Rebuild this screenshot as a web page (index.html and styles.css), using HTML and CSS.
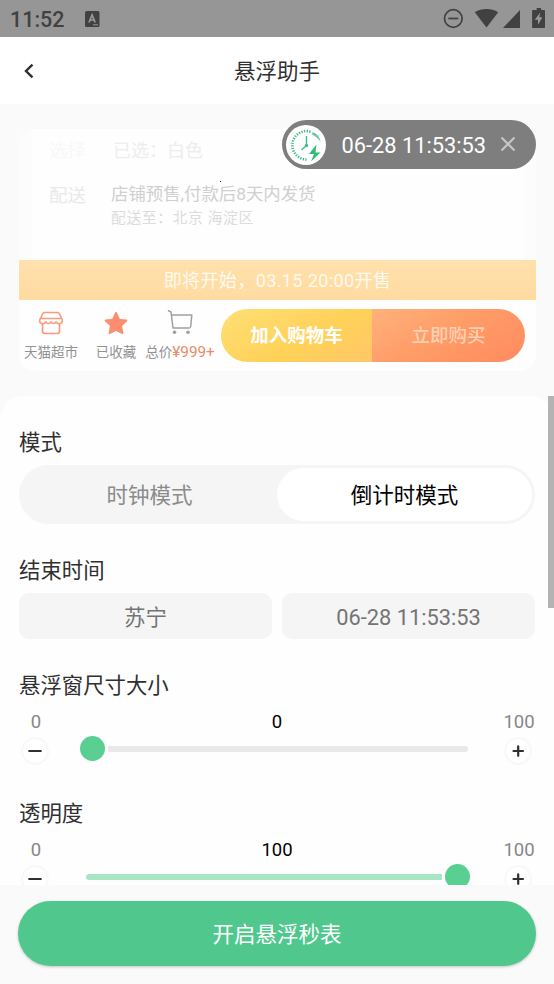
FILE: index.html
```html
<!DOCTYPE html>
<html lang="zh-CN">
<head>
<meta charset="utf-8">
<title>悬浮助手</title>
<link rel="stylesheet" href="styles.css">
</head>
<body>
<div class="app">
  <div class="status">
    <span class="status-time">11:52</span>
    <svg class="status-app" width="15" height="16" viewBox="0 0 15 16"><rect width="14.5" height="16" rx="1.5" fill="#414141"/><path d="M4 11.5 7.1 4l3.1 7.5M5.2 9h3.9" fill="none" stroke="#999" stroke-width="1.7"/><path d="M8 13.8h5" stroke="#999" stroke-width="1"/></svg>
    <svg class="status-icons" width="104" height="22" viewBox="0 0 104 22">
      <g fill="none" stroke="#414141" stroke-width="1.7"><circle cx="10.3" cy="11.5" r="8.8"/><path d="M5.3 11.5h10"/></g>
      <path fill="#414141" d="M31.8 5.2C38.5.8 48.5.8 55.2 5.2L43.5 20.500zM60 21 77 3v18zM90.700 3h3V1h4.400v2h3.100q.8 0 .8.8v16.400q0 .8-.8.8H89.900q-.8 0-.8-.8V3.800q0-.8.8-.8z"/>
      <path fill="#999" d="M97.300 5.500 91.800 12.800h3.200v5l4.300-7.600h-3z"/>
    </svg>
  </div>
  <header class="header">
    <svg class="back" width="12" height="16" viewBox="0 0 12 16"><path d="M9.500 1.700 3 8l6.500 6.400" fill="none" stroke="#303030" stroke-width="2.400"/></svg>
    <h1>悬浮助手</h1>
  </header>

  <main class="content">
    <section class="preview">
      <div class="goods">
        <div class="goods-row first"><span class="goods-key">选择</span><span class="goods-pick">已选：白色</span></div>
        <div class="goods-row second"><span class="goods-key">配送</span>
          <div><div class="goods-main">店铺预售,付款后8天内发货</div><div class="goods-sub">配送至：北京 海淀区</div></div>
        </div>
      </div>
      <div class="banner">即将开始，03.15 20:00开售</div>
      <div class="buybar">
        <div class="tool shop"><svg width="26" height="26" viewBox="0 0 26 26"><g fill="none" stroke="#f99b7d" stroke-width="1.700" stroke-linejoin="round"><path d="M6.500 2.500h13q1.500 0 2 1.500L24.300 10q.5 2.500-1.800 3.500-2.500 1-4.500-1.500-2.500 3-5 0-2.500 3-5 0-2 2.500-4.500 1.500Q1.200 12.500 1.700 10L4.500 4q.5-1.500 2-1.500zM2.600 8.500h20.800M4.500 14v7q0 2.500 2.500 2.500h12q2.500 0 2.500-2.500v-7"/></g></svg><span>天猫超市</span></div>
        <div class="tool fav"><svg width="26" height="26" viewBox="0 0 26 26"><path d="m13 3 3.100 6.700 7.300.9-5.400 5 1.400 7.400-6.400-3.200L6.600 23 8 15.600l-5.400-5 7.300-.9z" fill="#fc8d6e" stroke="#fc8d6e" stroke-width="2" stroke-linejoin="round"/></svg><span>已收藏</span></div>
        <div class="tool price"><svg width="26" height="26" viewBox="0 0 26 26"><g fill="none" stroke="#a0a0a0" stroke-width="1.500" stroke-linecap="round" stroke-linejoin="round"><path d="M1.500 1.800 4 3l2 16h16q1.500 0 1.700-1.500L24.800 6H4.500"/></g><circle cx="7.500" cy="23.300" r="1.800" fill="#a0a0a0"/><circle cx="21" cy="23.300" r="1.800" fill="#a0a0a0"/></svg><span>总价<b>¥999+</b></span></div>
        <div class="buy"><div class="cart">加入购物车</div><div class="now">立即购买</div></div>
      </div>
      <i class="speck"></i>
      <div class="float">
        <div class="float-logo"><svg width="40" height="40" viewBox="0 0 40 40"><circle cx="20" cy="20" r="20" fill="#fff"/><path d="M20.500 34.500A14.200 14.200 0 1 1 25.500 7" fill="none" stroke="#43bc84" stroke-width="2.600" stroke-dasharray="1.300 1.300"/><path d="M26.500 7Q33.500 9.500 34.500 17q-2.800-4.800-8.500-7.500z" fill="#43bc84" opacity=".8"/><path d="M20.500 11v9.500L15.500 25" fill="none" stroke="#43bc84" stroke-width="1.400"/><circle cx="20.500" cy="20.500" r="1.700" fill="#43bc84"/><path d="m30.500 19.500-7.500 9.500h5L25 36.500l9.500-9h-5z" fill="#32bc79"/></svg></div>
        <span class="float-time">06-28 11:53:53</span>
        <svg class="float-close" width="16" height="16" viewBox="0 0 16 16"><path d="m1.500 1.500 13 13m0-13-13 13" stroke="#c6c6c6" stroke-width="2.200"/></svg>
      </div>
    </section>

    <section class="panel">
      <h2>模式</h2>
      <div class="segment"><div class="seg">时钟模式</div><div class="seg active">倒计时模式</div></div>
      <h2 class="spaced">结束时间</h2>
      <div class="fields"><div class="field">苏宁</div><div class="field time">06-28 11:53:53</div></div>
      <h2 class="spaced">悬浮窗尺寸大小</h2>
      <div class="range">
        <span class="edge">0</span><span class="value">0</span><span class="edge">100</span>
        <div class="step"><svg width="14" height="14" viewBox="0 0 14 14"><path d="M1.200 7h11.600"/></svg></div>
        <div class="slider"><i class="thumb"></i><i class="track"></i></div>
        <div class="step"><svg width="14" height="14" viewBox="0 0 14 14"><path d="M2.500 7h9.500M7.200 2.300v9.500"/></svg></div>
      </div>
      <h2 class="spaced">透明度</h2>
      <div class="range">
        <span class="edge">0</span><span class="value">100</span><span class="edge">100</span>
        <div class="step"><svg width="14" height="14" viewBox="0 0 14 14"><path d="M1.200 7h11.600"/></svg></div>
        <div class="slider full"><i class="track"></i><i class="thumb"></i></div>
        <div class="step"><svg width="14" height="14" viewBox="0 0 14 14"><path d="M2.500 7h9.500M7.200 2.300v9.500"/></svg></div>
      </div>
    </section>
  </main>
  <footer class="footer"><button>开启悬浮秒表</button></footer>
  <i class="scrollbar"></i>
</div>
</body>
</html>
```
FILE: styles.css
```css
* { box-sizing: border-box; }
body { margin: 0; font-family: Roboto, "Noto Sans CJK SC", sans-serif; background: #fafafa; color: #303030; }
svg { display: block; flex: none; }
h1, h2 { margin: 0; font-weight: 400; }
.app { position: relative; width: 554px; height: 984px; display: flex; flex-direction: column; overflow: hidden; }
.status { height: 37px; flex: none; display: flex; align-items: center; padding: 0 7px 0 10px; background: #969696; color: #414141; }
.status-time { width: 75px; font-size: 21.5px; font-weight: 500; line-height: 35px; padding-top: 2px; }
.status-icons { margin: -2px 0 0 auto; }
.header { height: 67px; flex: none; display: grid; grid-template-columns: 40px 1fr 40px; align-items: center; background: #fff; }
.back { margin-left: 23px; }
h1 { font-size: 21.5px; line-height: 30px; padding-top: 2px; text-align: center; }
.content { height: 781px; flex: none; overflow: hidden; padding-top: 25px; }

.preview { position: relative; width: 517px; height: 242px; margin: 0 0 25px 19px; border-radius: 16px; background: #fefefe; }
.goods { height: 131px; padding: 9px 0 0 30px; background: linear-gradient(90deg, #fcfcfc 12px, #fefefe 13px, #fefefe 505px, #fcfcfc 506px); border-radius: 16px 16px 0 0; color: #ddd; }
.goods-row { display: flex; font-size: 18px; line-height: 26px; }
.goods-key { width: 62px; color: #e9e9e9; font-size: 18.5px; }
.first .goods-key { color: #f8f8f8; }
.goods-pick { color: #ededed; padding-left: 2px; }
.second { margin-top: 17px; }
.second .goods-key { padding-top: 2px; }
.goods-main { font-size: 17.4px; color: #d0d0d0; white-space: nowrap; }
.goods-sub { font-size: 14.8px; letter-spacing: .6px; line-height: 22px; color: #dcdcdc; white-space: nowrap; }
.banner { height: 40px; background: linear-gradient(#ffe1ac, #ffdba1); color: #fffaf0; font-size: 18px; letter-spacing: .4px; line-height: 42px; text-align: center; }
.buybar { height: 71px; display: flex; }
.tool { display: flex; flex-direction: column; align-items: center; padding-top: 10px; font-size: 13.5px; line-height: 20px; color: #929292; white-space: nowrap; }
.tool span { margin-top: 6px; }
.tool b { color: #e98a68; font-weight: 400; font-size: 15.3px; }
.shop { width: 64px; }
.fav { width: 66px; }
.price { width: 62px; padding-top: 9px; }
.price span { margin-top: 7px; }
.buy { width: 304px; height: 53px; margin: 9px 0 0 10px; display: flex; border-radius: 27px; overflow: hidden; font-size: 18.5px; line-height: 54px; text-align: center; }
.cart { width: 151px; background: linear-gradient(150deg, #fedf76, #ffd157 60%, #ffc66a); color: #fff; font-weight: 700; }
.now { flex: 1; background: linear-gradient(150deg, #ffb17d, #ff9d67 45%, #ff8a60); color: #ffd0b4; font-weight: 500; }
.speck { position: absolute; left: 201px; top: 52px; width: 1px; height: 1px; background: #333; }
.float { position: absolute; left: 263px; top: -9px; width: 254px; height: 49px; display: flex; align-items: center; padding-left: 4px; border-radius: 25px; background: #7e7e7e; color: #fff; }
.float-time { width: 159px; padding-left: 15.5px; font-size: 21.8px; white-space: nowrap; padding-top: 2px; }
.float-close { margin-left: 15px; margin-top: -1px; }

.panel { height: 560px; padding: 32px 19px 0 19px; border-radius: 24px 24px 0 0; background: #fefefe; }
h2 { height: 28px; font-size: 21.4px; line-height: 30px; margin-bottom: 9px; }
h2.spaced { margin-top: 32px; }
.segment { height: 59px; padding: 3px; display: flex; border-radius: 30px; background: #f5f5f5; font-size: 21.5px; line-height: 55px; text-align: center; }
.seg { flex: 1; height: 53px; color: #8b8b8b; }
.seg.active { border-radius: 27px; background: #fff; color: #000; }
.fields { display: flex; gap: 10px; }
.field { flex: 1; height: 46px; border-radius: 10px; background: #f5f5f5; color: #747474; font-size: 21.5px; line-height: 49px; text-align: center; }
.field.time { font-size: 21.8px; line-height: 49px; }
.range { display: grid; grid-template-columns: 32px 1fr 34px; grid-template-rows: 24px 32px; align-items: center; padding-top: 2px; margin-bottom: 33px; }
.edge, .value { display: flex; justify-content: center; padding-left: 2px; font-size: 18.5px; line-height: 24px; color: #878787; }
.value { color: #000; }
.step { width: 24px; height: 24px; margin: 1px auto 0; display: flex; align-items: center; justify-content: center; border-radius: 50%; background: #fff; box-shadow: 0 0 2px 1.5px #f5f5f5; }
.step path { fill: none; stroke: #303030; stroke-width: 2.2; stroke-linecap: round; }
.slider { height: 26px; margin: -3px 31px 0 29px; display: flex; align-items: center; gap: 3px; }
.slider .thumb { flex: none; width: 25px; height: 25px; border-radius: 50%; background: #5acf92; }
.slider .track { flex: 1; height: 6px; margin-right: 2px; border-radius: 0 3px 3px 0; background: #e9e9e9; }
.slider.full .track { margin: 0 0 0 6px; border-radius: 3px 0 0 3px; background: #a6e6c4; }
.range + h2.spaced { margin-top: 0; }

.footer { height: 99px; flex: none; padding: 16px 18px 0; background: #fafafa; }
button { display: block; width: 100%; height: 65px; padding: 2px 0 0; border: 0; border-radius: 33px; background: #50c78d; color: #fff; font: 400 21.5px/63px Roboto, "Noto Sans CJK SC", sans-serif; box-shadow: 0 1px 3px rgba(0, 0, 0, .22); }
.scrollbar { position: absolute; right: 0; top: 396px; width: 6px; height: 212px; background: #b3b3b3; }
```
